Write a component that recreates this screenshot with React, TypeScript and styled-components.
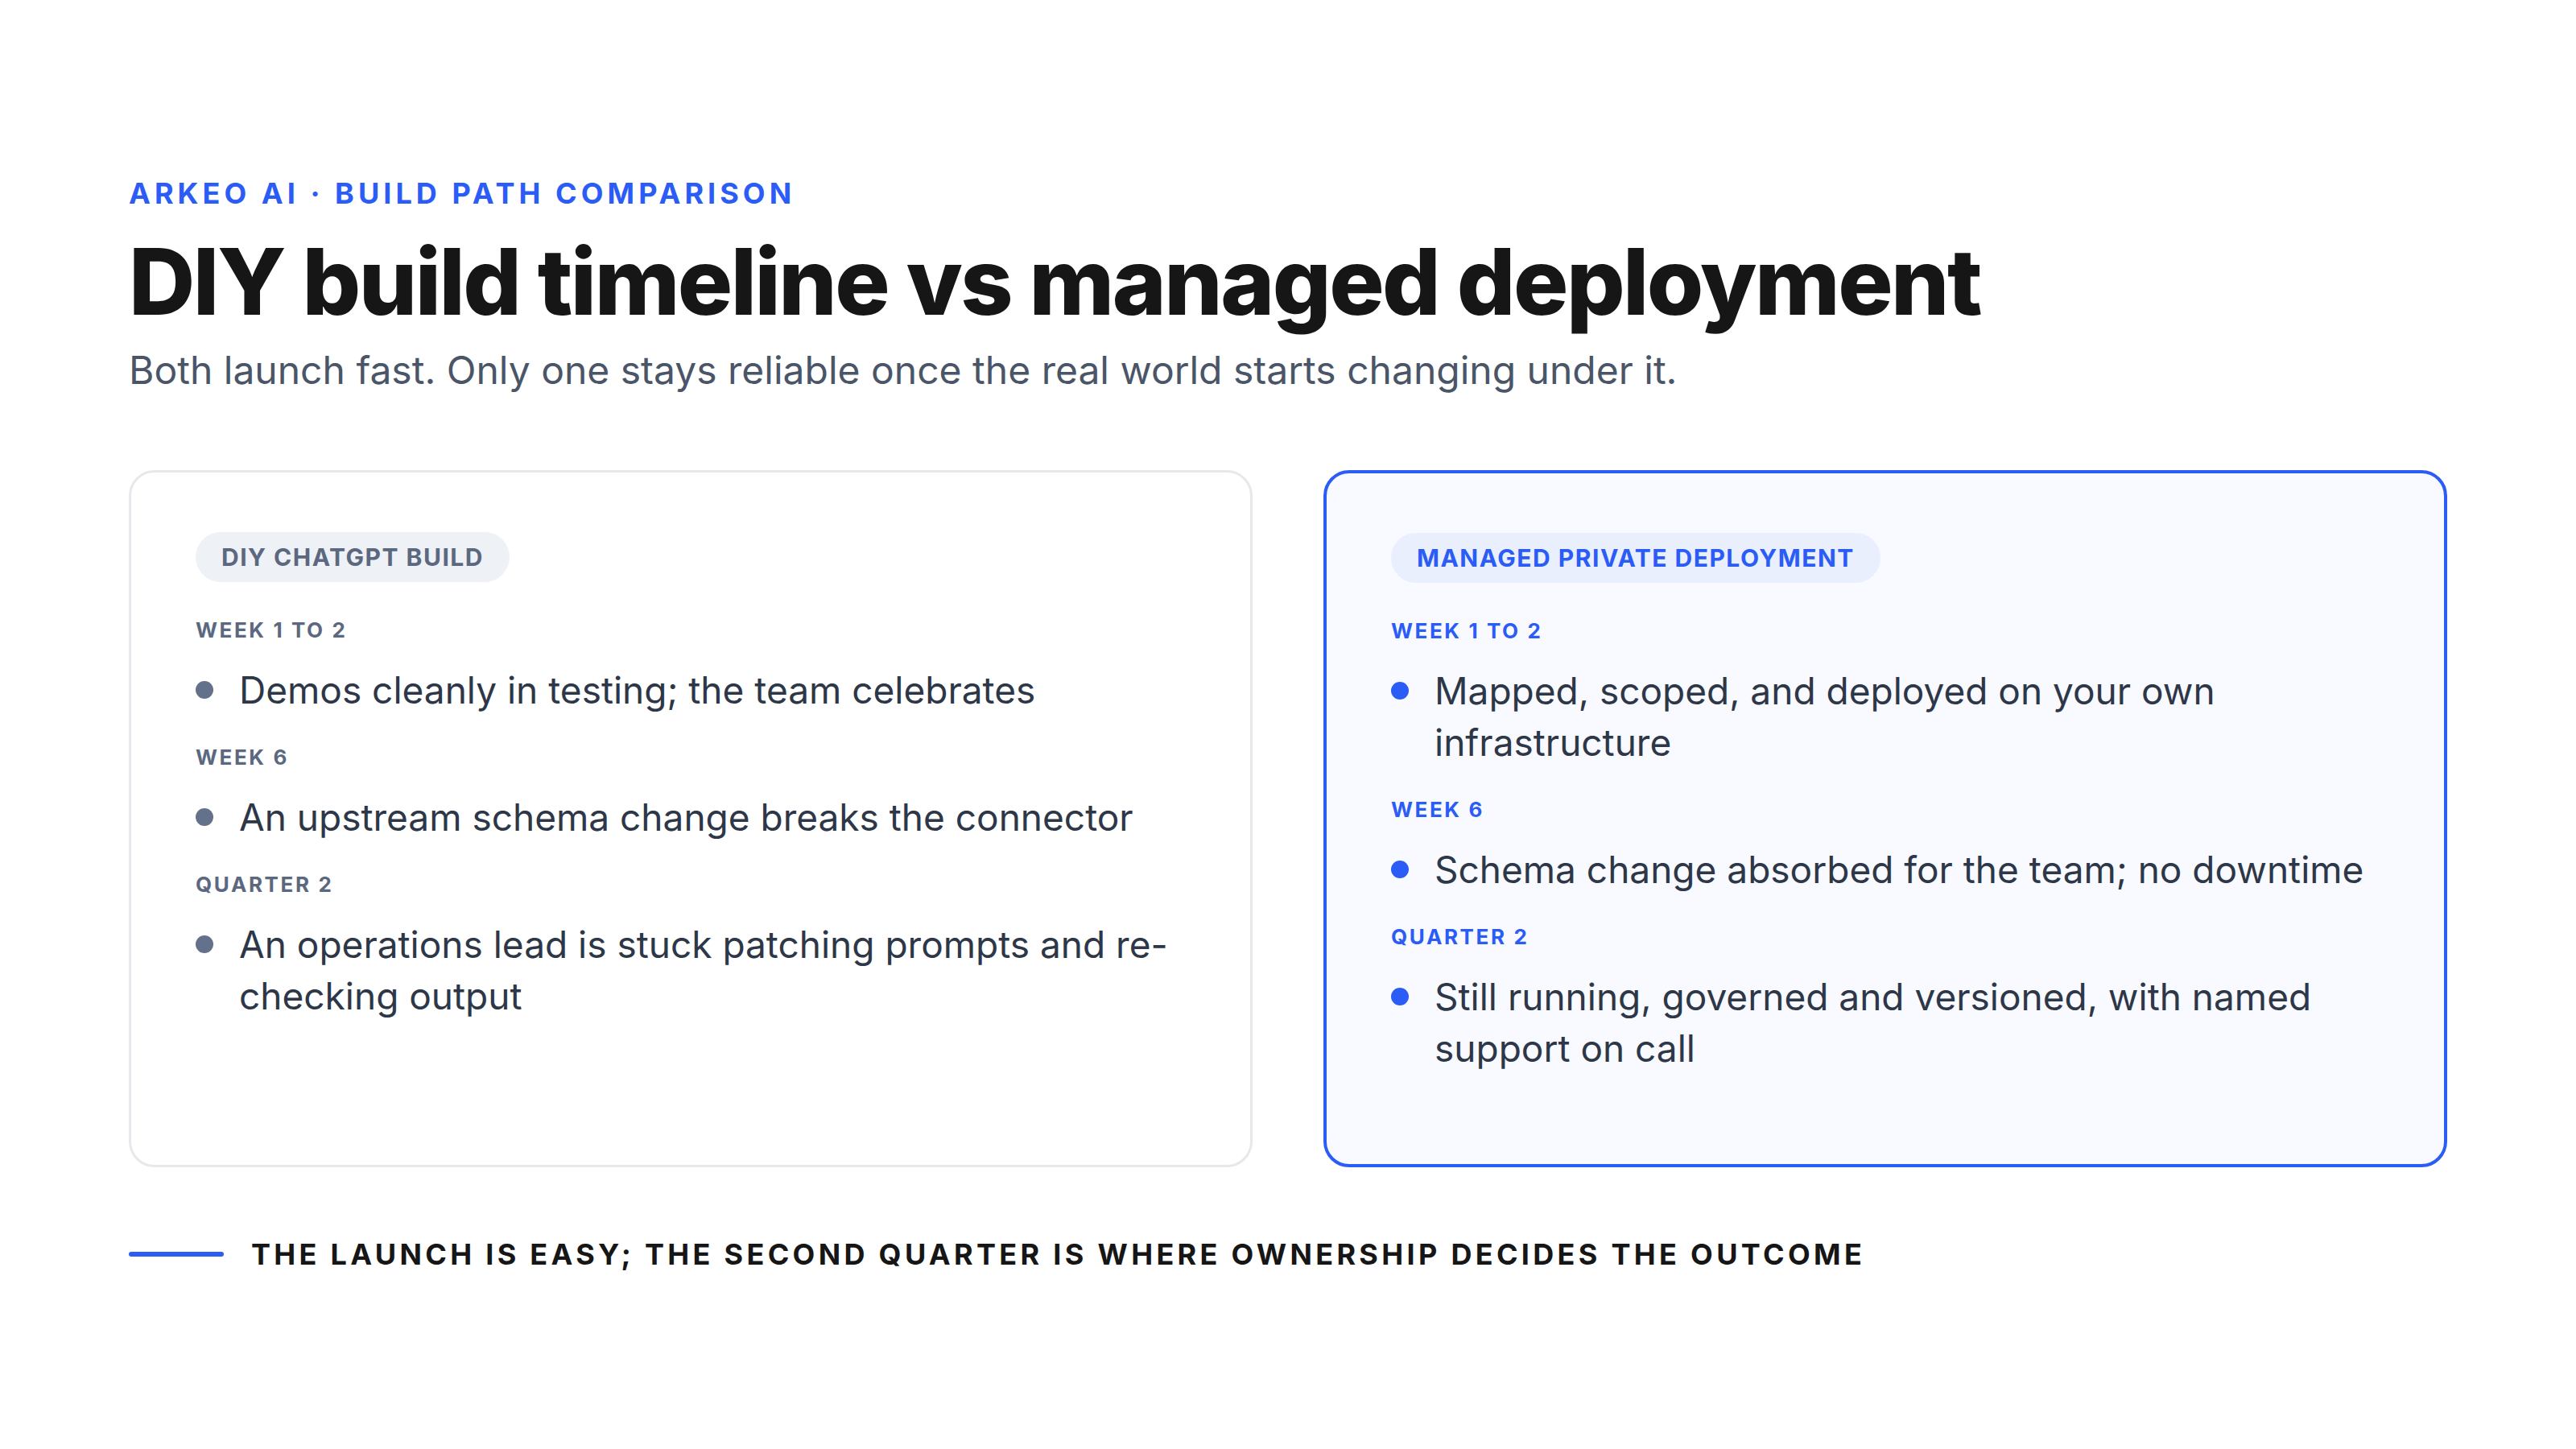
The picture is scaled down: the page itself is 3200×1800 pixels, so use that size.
import React from "react";
import styled, { createGlobalStyle } from "styled-components";

const Global = createGlobalStyle`
  html, body { margin: 0; padding: 0; background: #fff; }
  body { font-family: Inter, "Noto Sans", sans-serif; }
`;

const Page = styled.div`
  width: 3200px;
  height: 1800px;
  box-sizing: border-box;
  padding: 216px 160px 0;
  display: flex;
  flex-direction: column;
`;

const Eyebrow = styled.div`
  font-size: 36px;
  font-weight: 700;
  letter-spacing: 0.14em;
  color: #2b5cf6;
  line-height: 48px;
`;

const Title = styled.h1`
  margin: 22px 0 0;
  font-size: 114px;
  font-weight: 800;
  letter-spacing: -0.022em;
  color: #161616;
  line-height: 128px;
`;

const Subtitle = styled.p`
  margin: 14px 0 0;
  font-size: 48px;
  color: #4a5568;
  line-height: 64px;
`;

const Cards = styled.div`
  margin-top: 92px;
  display: grid;
  grid-template-columns: 1fr 1fr;
  gap: 88px;
`;

const Card = styled.div<{ $accent?: boolean }>`
  height: 866px;
  box-sizing: border-box;
  padding: 74px 80px;
  border-radius: 32px;
  border: ${(p) => (p.$accent ? "4px solid #2b5cf6" : "3px solid #e6e8ec")};
  background: ${(p) => (p.$accent ? "#f8faff" : "#fff")};
  display: flex;
  flex-direction: column;
  align-items: flex-start;
`;

const Pill = styled.div<{ $accent?: boolean }>`
  height: 62px;
  padding: 0 32px;
  border-radius: 31px;
  display: flex;
  align-items: center;
  font-size: 30px;
  font-weight: 700;
  letter-spacing: 0.05em;
  background: ${(p) => (p.$accent ? "#e9effd" : "#eef1f6")};
  color: ${(p) => (p.$accent ? "#2b5cf6" : "#5b6880")};
  margin-bottom: 44px;
`;

const Label = styled.div<{ $accent?: boolean }>`
  font-size: 26px;
  font-weight: 700;
  letter-spacing: 0.1em;
  line-height: 32px;
  color: ${(p) => (p.$accent ? "#2b5cf6" : "#5b6880")};
  margin-bottom: 26px;
`;

const Item = styled.div<{ $accent?: boolean }>`
  display: flex;
  gap: 32px;
  font-size: 46px;
  line-height: 64px;
  color: #2d3748;
  margin-bottom: 36px;
  &::before {
    content: "";
    flex: none;
    width: 22px;
    height: 22px;
    border-radius: 50%;
    margin-top: 21px;
    background: ${(p) => (p.$accent ? "#2b5cf6" : "#64718a")};
  }
`;

const Footer = styled.div`
  margin-top: 86px;
  display: flex;
  align-items: center;
  gap: 34px;
`;

const Rule = styled.div`
  width: 118px;
  height: 6px;
  border-radius: 3px;
  background: #2b5cf6;
`;

const FooterText = styled.div`
  font-size: 36px;
  font-weight: 700;
  letter-spacing: 0.12em;
  color: #161616;
`;

const data = [
  {
    pill: "DIY CHATGPT BUILD",
    accent: false,
    rows: [
      ["WEEK 1 TO 2", "Demos cleanly in testing; the team celebrates"],
      ["WEEK 6", "An upstream schema change breaks the connector"],
      ["QUARTER 2", "An operations lead is stuck patching prompts and re-checking output"],
    ],
  },
  {
    pill: "MANAGED PRIVATE DEPLOYMENT",
    accent: true,
    rows: [
      ["WEEK 1 TO 2", "Mapped, scoped, and deployed on your own infrastructure"],
      ["WEEK 6", "Schema change absorbed for the team; no downtime"],
      ["QUARTER 2", "Still running, governed and versioned, with named support on call"],
    ],
  },
];

export default function App() {
  return (
    <>
      <Global />
      <Page>
        <Eyebrow>ARKEO AI · BUILD PATH COMPARISON</Eyebrow>
        <Title>DIY build timeline vs managed deployment</Title>
        <Subtitle>Both launch fast. Only one stays reliable once the real world starts changing under it.</Subtitle>
        <Cards>
          {data.map((c) => (
            <Card key={c.pill} $accent={c.accent}>
              <Pill $accent={c.accent}>{c.pill}</Pill>
              {c.rows.map(([l, t]) => (
                <React.Fragment key={l}>
                  <Label $accent={c.accent}>{l}</Label>
                  <Item $accent={c.accent}>{t}</Item>
                </React.Fragment>
              ))}
            </Card>
          ))}
        </Cards>
        <Footer>
          <Rule />
          <FooterText>THE LAUNCH IS EASY; THE SECOND QUARTER IS WHERE OWNERSHIP DECIDES THE OUTCOME</FooterText>
        </Footer>
      </Page>
    </>
  );
}
